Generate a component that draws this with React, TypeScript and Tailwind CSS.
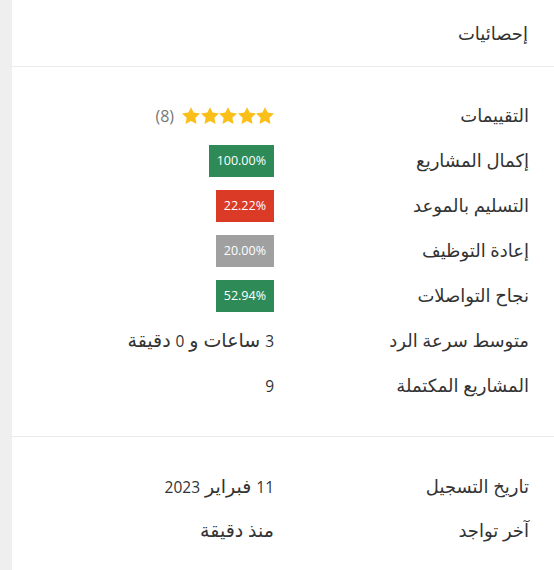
import React from "react";

type Row = { label: string; value: React.ReactNode };

function Badge({ text, color }: { text: string; color: string }) {
  return (
    <span className={`inline-flex h-[32px] items-center px-[8px] text-[12.5px] font-medium text-white ${color}`} dir="ltr">
      {text}
    </span>
  );
}

function Stars() {
  return (
    <div className="flex items-center gap-[8px]" dir="ltr">
      <span className="text-[16px] text-[#777]">(8)</span>
      <div className="flex gap-[0.5px]">
        {[0, 1, 2, 3, 4].map((i) => (
          <svg key={i} viewBox="0 0 24 23" className="h-[17.5px] w-[18px] fill-[#fbbf1a]">
            <path d="M12 0l3.5 7.3 8.5 1.1-6.2 5.8 1.6 8.3L12 18.4l-7.4 4.1 1.6-8.3L0 8.4l8.5-1.1z" />
          </svg>
        ))}
      </div>
    </div>
  );
}

// Arabic glyphs run narrow in the fallback font, so digits get their own smaller size
function Mixed({ text }: { text: string }) {
  return (
    <>
      {text.split(/(\d+)/).map((part, i) =>
        /^\d+$/.test(part) ? (
          <span key={i} className="text-[15.5px]">{part}</span>
        ) : (
          <span key={i}>{part}</span>
        )
      )}
    </>
  );
}

function StatRow({ label, value, h }: Row & { h: string }) {
  return (
    <div className={`flex items-center ${h}`}>
      <div className="w-[255px] shrink-0 text-[18px] text-[#333]">{label}</div>
      <div className="text-[19px] text-[#333]">
        {typeof value === "string" ? <Mixed text={value} /> : value}
      </div>
    </div>
  );
}

export default function App() {
  const stats: Row[] = [
    { label: "التقييمات", value: <Stars /> },
    { label: "إكمال المشاريع", value: <Badge text="100.00%" color="bg-[#2e8b57]" /> },
    { label: "التسليم بالموعد", value: <Badge text="22.22%" color="bg-[#db3a27]" /> },
    { label: "إعادة التوظيف", value: <Badge text="20.00%" color="bg-[#a0a0a0]" /> },
    { label: "نجاح التواصلات", value: <Badge text="52.94%" color="bg-[#2e8b57]" /> },
    { label: "متوسط سرعة الرد", value: "3 ساعات و 0 دقيقة" },
    { label: "المشاريع المكتملة", value: "9" },
  ];
  const meta: Row[] = [
    { label: "تاريخ التسجيل", value: "11 فبراير 2023" },
    { label: "آخر تواجد", value: "منذ دقيقة" },
  ];

  return (
    <div className="flex h-[570px] w-[554px] bg-[#efefef]" style={{ fontFamily: '"Open Sans", "DejaVu Sans", sans-serif' }}>
      <div className="ml-[12px] flex-1 bg-white" dir="rtl">
        <div className="flex h-[67px] items-center border-b border-[#ebebeb] pr-[26px] text-[18px] text-[#333]">
          إحصائيات
        </div>
        <div className="pb-[28px] pr-[25px] pt-[26px]">
          {stats.map((r) => (
            <StatRow key={r.label} {...r} h="h-[45px]" />
          ))}
        </div>
        <div className="border-t border-[#ebebeb] pr-[25px] pt-[27px]">
          {meta.map((r) => (
            <StatRow key={r.label} {...r} h="h-[44px]" />
          ))}
        </div>
      </div>
    </div>
  );
}
